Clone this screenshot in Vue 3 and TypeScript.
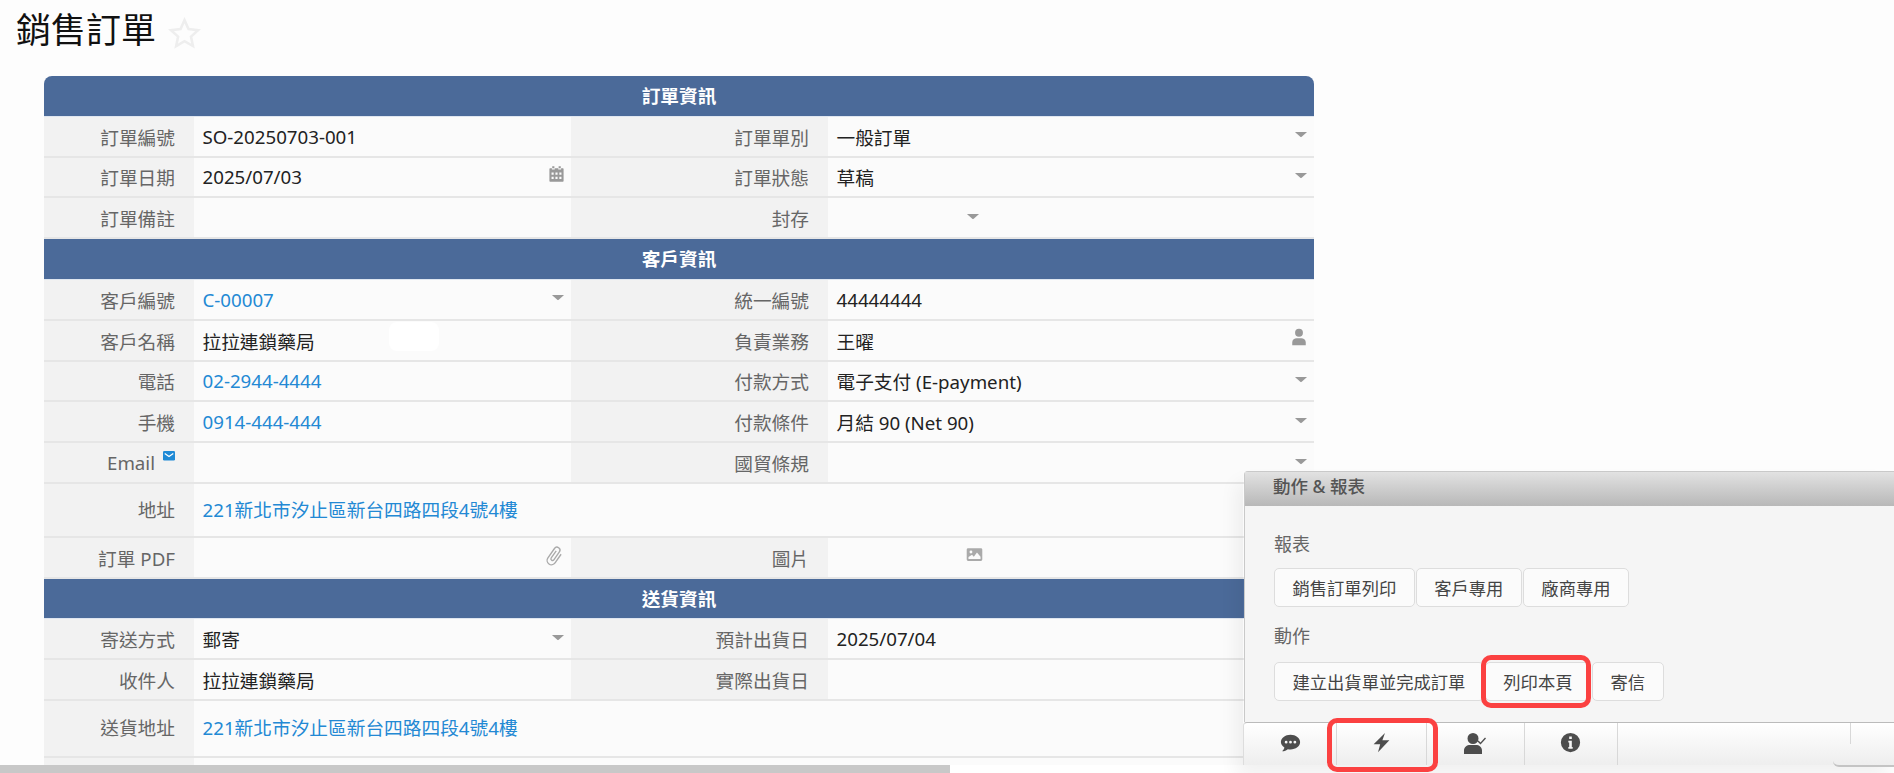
<script setup lang="ts">
type Cell = { label: string; value?: string; link?: boolean; icon?: string; narrow?: boolean; mail?: boolean; patch?: boolean }
type Row = { head?: string; wide?: boolean; tall?: number; cells?: Cell[] }

const icons: Record<string, string> = {
  caret: 'M3 8.5c-.6 0-.9.7-.5 1.1l8.8 7.6c.4.3 1 .3 1.4 0l8.8-7.6c.4-.4.1-1.1-.5-1.1z',
  calendar: 'M6 1h3v3H6zM15 1h3v3h-3zM3 4h2.5v1.5h4V4h5v1.5h4V4H21a1 1 0 0 1 1 1v17a1 1 0 0 1-1 1H3a1 1 0 0 1-1-1V5a1 1 0 0 1 1-1zM5 10v3h3v-3zM10.5 10v3h3v-3zM16 10v3h3v-3zM5 16v3h3v-3zM10.5 16v3h3v-3zM16 16v3h3v-3z',
  user: 'M12 1a5 5 0 1 1 0 10.5A5 5 0 0 1 12 1zM3 23v-4c0-3.500 3-5.500 6-5.500h6c3 0 6 2 6 5.500v4z',
  paperclip: 'M16.500 6v11.500a4 4 0 0 1-8 0V5a2.500 2.500 0 0 1 5 0v10.500a1 1 0 0 1-2 0V6H10v9.500a2.500 2.500 0 0 0 5 0V5a4 4 0 0 0-8 0v12.500a5.500 5.500 0 0 0 11 0V6z',
  image: 'M3 3h18a2 2 0 0 1 2 2v14a2 2 0 0 1-2 2H3a2 2 0 0 1-2-2V5a2 2 0 0 1 2-2zM3.500 5.500v13h17v-3.500l-5-6-4.500 6-2.500-2.500-5 3zM7 6.500a2 2 0 1 0 0 4 2 2 0 0 0 0-4z',
  chat: 'M12 3c6 0 11 3.700 11 8.500S18 20 12 20c-1 0-2-.1-3-.4C7.500 21 5 22 2.500 22c1.300-1.200 2.300-2.800 2.500-4.200C2.600 16.200 1 14 1 11.500 1 6.700 6 3 12 3zM7 10a1.600 1.600 0 1 0 0 3.200A1.600 1.600 0 0 0 7 10zM12 10a1.600 1.600 0 1 0 0 3.200 1.600 1.600 0 0 0 0-3.200zM17 10a1.600 1.600 0 1 0 0 3.200 1.600 1.600 0 0 0 0-3.200z',
  bolt: 'M16 1 3 14h7.500L8 23 21 9.500h-8z',
  usercheck: 'M10 2a5.500 5.500 0 1 1 0 11 5.500 5.500 0 0 1 0-11zM1 23v-3.500C1 16 4 14 7 14h6c3 0 6 2 6 5.500V23zM23 7.500l-5.500 6-3-3 1-1 2 2 4.500-5z',
  info: 'M12 1a11 11 0 1 1 0 22 11 11 0 0 1 0-22zM10.500 5v3h3V5zM9.500 10v2h1v5h-1v2h5v-2h-1v-7z',
}

const rows: Row[] = [
  { head: '訂單資訊' },
  { cells: [{ label: '訂單編號', value: 'SO-20250703-001' }, { label: '訂單單別', value: '一般訂單', icon: 'caret' }] },
  { cells: [{ label: '訂單日期', value: '2025/07/03', icon: 'calendar' }, { label: '訂單狀態', value: '草稿', icon: 'caret' }] },
  { cells: [{ label: '訂單備註' }, { label: '封存', icon: 'caret', narrow: true }] },
  { head: '客戶資訊' },
  { cells: [{ label: '客戶編號', value: 'C-00007', link: true, icon: 'caret' }, { label: '統一編號', value: '44444444' }] },
  { cells: [{ label: '客戶名稱', value: '拉拉連鎖藥局', patch: true }, { label: '負責業務', value: '王曜', icon: 'user' }] },
  { cells: [{ label: '電話', value: '02-2944-4444', link: true }, { label: '付款方式', value: '電子支付 (E-payment)', icon: 'caret' }] },
  { cells: [{ label: '手機', value: '0914-444-444', link: true }, { label: '付款條件', value: '月結 90 (Net 90)', icon: 'caret' }] },
  { cells: [{ label: 'Email', mail: true }, { label: '國貿條規', icon: 'caret' }] },
  { wide: true, tall: 1, cells: [{ label: '地址', value: '221新北市汐止區新台四路四段4號4樓', link: true }] },
  { cells: [{ label: '訂單 PDF', icon: 'paperclip' }, { label: '圖片', icon: 'image', narrow: true }] },
  { head: '送貨資訊' },
  { cells: [{ label: '寄送方式', value: '郵寄', icon: 'caret' }, { label: '預計出貨日', value: '2025/07/04' }] },
  { cells: [{ label: '收件人', value: '拉拉連鎖藥局' }, { label: '實際出貨日' }] },
  { wide: true, tall: 2, cells: [{ label: '送貨地址', value: '221新北市汐止區新台四路四段4號4樓', link: true }] },
  { wide: true, cells: [{ label: '' }] },
]

const reports = ['銷售訂單列印', '客戶專用', '廠商專用']
const actions = ['建立出貨單並完成訂單', '列印本頁', '寄信']
const tabs = ['chat', 'bolt', 'usercheck', 'info']
</script>

<template>
  <div class="page">
    <div class="scroller">
      <h1 class="title">
        銷售訂單
        <svg class="star" viewBox="0 0 32 32"><path d="M16 3l3.900 8.600 9.300 1.100-6.900 6.300 1.900 9.200L16 23.500l-8.100 4.700 1.900-9.200-6.900-6.300 9.300-1.100z" /></svg>
      </h1>

      <div class="sheet">
        <template v-for="(row, i) in rows" :key="i">
          <div v-if="row.head" class="head">{{ row.head }}</div>
          <div v-else class="row" :class="{ wide: row.wide, tall1: row.tall === 1, tall2: row.tall === 2 }">
            <template v-for="cell in row.cells" :key="cell.label">
              <div class="label">
                <span>{{ cell.label }}</span>
                <svg v-if="cell.mail" class="mail" viewBox="0 0 14 11">
                  <rect width="14" height="11" rx="1.500" fill="#1f8ad6" />
                  <path d="M2 3l5 3.500L12 3" fill="none" stroke="#fff" stroke-width="1.400" />
                </svg>
              </div>
              <div class="value" :class="{ narrow: cell.narrow }">
                <span :class="{ link: cell.link }">{{ cell.value }}</span>
                <svg v-if="cell.icon" class="ico" :class="'ico-' + cell.icon" viewBox="0 0 24 24" fill-rule="evenodd">
                  <path :d="icons[cell.icon]" />
                </svg>
                <div v-if="cell.patch" class="patch"></div>
              </div>
            </template>
          </div>
        </template>
      </div>
    </div>
    <div class="hbar"><div class="thumb"></div></div>

    <div class="dock">
      <div class="panel">
        <div class="panel-title">動作 &amp; 報表</div>
        <div class="panel-body">
          <div class="group-label first">報表</div>
          <div class="btns">
            <button v-for="b in reports" :key="b" class="btn">{{ b }}</button>
          </div>
          <div class="group-label second">動作</div>
          <div class="btns">
            <button v-for="b in actions" :key="b" class="btn">{{ b }}</button>
          </div>
        </div>
      </div>
      <div class="tabs">
        <div v-for="t in tabs" :key="t" class="tab">
          <svg class="tab-ico" :class="'tab-ico-' + t" viewBox="0 0 24 24" fill-rule="evenodd"><path :d="icons[t]" /></svg>
        </div>
        <div class="tab-rest"></div>
        <div class="tab-end"></div>
        <div class="tab-foot"></div>
      </div>
      <div class="mark mark-print"></div>
      <div class="mark mark-tab"></div>
    </div>
  </div>
</template>

<style scoped>
.page {
  position: relative;
  height: 773px;
  display: flex;
  flex-direction: column;
  overflow: hidden;
  background: #fff;
  font-family: "Noto Sans", "Noto Sans CJK TC", sans-serif;
}
.scroller { flex: 1; min-height: 0; overflow: hidden; background: #fdfdfd; }
.title {
  margin: 0;
  height: 76px;
  padding-left: 16px;
  display: flex;
  align-items: flex-start;
  font-size: 35px;
  line-height: 60px;
  font-weight: 400;
  color: #111;
}
.star { width: 33px; height: 33px; margin: 17px 0 0 12px; fill: none; stroke: #eee; stroke-width: 2.500; }

.sheet { margin-left: 44px; width: 1270px; font-size: 18.700px; }
.head {
  height: 40.800px;
  line-height: 40.800px;
  background: #4b6a99;
  border-bottom: 1px solid #dfe6f0;
  box-sizing: border-box;
  text-align: center;
  font-size: 18.700px;
  font-weight: 700;
  color: #fff;
}
.sheet > .head:first-child { border-radius: 8px 8px 0 0; }
.row {
  display: grid;
  grid-template-columns: 150px 376.500px 257.500px 486px;
  height: 40.800px;
  box-sizing: border-box;
}
.row.tall1 { height: 53.800px; }
.row.tall2 { height: 57px; }
.row.tall1 .label, .row.tall1 .value { padding-bottom: 2px; }
.row.tall2 .label, .row.tall2 .value { padding-bottom: 3px; }
.label {
  background: #f2f2f2;
  border-bottom: 2px solid #e6e6e6;
  padding-right: 19px;
  display: flex;
  align-items: center;
  justify-content: flex-end;
  color: #666;
}
.value {
  position: relative;
  background: #fbfbfb;
  border-bottom: 2px solid #e6e6e6;
  padding: 0 6px 0 8.500px;
  display: flex;
  align-items: center;
  justify-content: space-between;
  color: #222;
}
.row.wide .value { grid-column: span 3; }
.value.narrow { justify-content: flex-start; }
.value.narrow .ico { margin-left: 129px; }
.link { color: #2389d4; }
.ico { width: 14px; height: 14px; fill: #999; margin-top: -4px; flex: none; }
.ico-calendar { width: 17px; height: 18px; margin-top: -6px; }
.ico-user { width: 18px; height: 18px; margin-top: -6px; }
.ico-paperclip { width: 22px; height: 22px; transform: rotate(35deg); margin: -2px 0 0 0; fill: #aaa; }
.ico-image { width: 17px; height: 17px; fill: #aaa; margin-top: -6px; }
.mail { width: 12px; height: 9.500px; margin: -13px 0 0 8px; }
.patch {
  position: absolute;
  left: 195px;
  top: 1px;
  width: 50px;
  height: 29px;
  background: #fff;
  border-radius: 8px;
}

.hbar { height: 8px; background: #fff; flex: none; }
.thumb { width: 950px; height: 8px; background: #c8c8c8; }

.dock {
  position: absolute;
  left: 1243px;
  right: 0;
  top: 471px;
  height: 294px;
  display: flex;
  flex-direction: column;
  box-shadow: -6px 12px 18px rgba(0, 0, 0, 0.06);
}
.panel {
  flex: 1;
  min-height: 0;
  margin-left: 1px;
  background: #f5f5f5;
  border-left: 1px solid #c9c9c9;
  border-top: 1px solid #c9c9c9;
  border-radius: 4px 0 0 0;
}
.panel-title {
  height: 34px;
  padding-left: 28px;
  line-height: 28px;
  background: linear-gradient(#e2e2e2, #b8b8b8);
  font-size: 17.500px;
  font-weight: 500;
  color: #555;
}
.panel-body { padding-left: 29px; }
.group-label { font-size: 18px; line-height: 26px; color: #666; }
.group-label.first { margin: 25px 0 11px; }
.group-label.second { margin: 16px 0 13px; }
.btns { display: flex; gap: 1px; }
.btn {
  height: 39px;
  padding: 0 17.500px;
  background: #fbfbfb;
  border: 1px solid #ddd;
  border-radius: 5px;
  font: inherit;
  font-size: 17.300px;
  color: #444;
}
.tabs {
  position: relative;
  height: 42px;
  flex: none;
  display: grid;
  grid-template-columns: 93px 90px 97.500px 93.500px 1fr 44px;
  background: linear-gradient(#fff, #eee);
  border-top: 1px solid #bbb;
  box-shadow: inset 0 2px 0 #fff;
  border-left: 1px solid #ddd;
  border-radius: 4px 0 0 0;
}
.tab {
  display: flex;
  align-items: center;
  justify-content: center;
  border-right: 1px solid #d8d8d8;
  padding-bottom: 3px;
}
.tab-ico { width: 21px; height: 21px; fill: #4d4d4d; }
.tab-ico-usercheck { width: 24px; height: 24px; }
.tab-end { border-left: 1px solid #d8d8d8; height: 21px; }
.tab-foot {
  position: absolute;
  right: 0;
  bottom: -2px;
  width: 61px;
  height: 6px;
  border-bottom: 2px solid #c4c4c4;
  border-radius: 0 0 0 6px;
}
.mark {
  position: absolute;
  border: 5px solid #fb4141;
  border-radius: 10px;
  box-sizing: border-box;
  pointer-events: none;
}
.mark-print { left: 238px; top: 184px; width: 110px; height: 53px; }
.mark-tab { left: 84px; top: 247px; width: 111px; height: 54px; }
</style>
